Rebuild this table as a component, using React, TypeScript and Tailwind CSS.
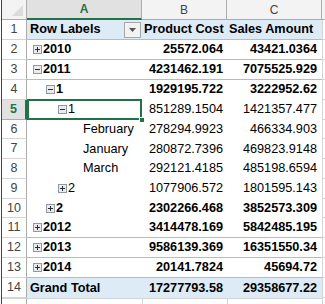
import React from "react";

type Row = {
  n: number;
  level: 0 | 1 | 2 | 3;
  btn?: "+" | "-";
  label: string;
  b: string;
  c: string;
  bold?: boolean;
  line?: boolean;
};

const rows: Row[] = [
  { n: 2, level: 0, btn: "+", label: "2010", b: "25572.064", c: "43421.0364", bold: true, line: true },
  { n: 3, level: 0, btn: "-", label: "2011", b: "4231462.191", c: "7075525.929", bold: true, line: true },
  { n: 4, level: 1, btn: "-", label: "1", b: "1929195.722", c: "3222952.62", bold: true },
  { n: 5, level: 2, btn: "-", label: "1", b: "851289.1504", c: "1421357.477" },
  { n: 6, level: 3, label: "February", b: "278294.9923", c: "466334.903" },
  { n: 7, level: 3, label: "January", b: "280872.7396", c: "469823.9148" },
  { n: 8, level: 3, label: "March", b: "292121.4185", c: "485198.6594" },
  { n: 9, level: 2, btn: "+", label: "2", b: "1077906.572", c: "1801595.143" },
  { n: 10, level: 1, btn: "+", label: "2", b: "2302266.468", c: "3852573.309", bold: true },
  { n: 11, level: 0, btn: "+", label: "2012", b: "3414478.169", c: "5842485.195", bold: true, line: true },
  { n: 12, level: 0, btn: "+", label: "2013", b: "9586139.369", c: "16351550.34", bold: true, line: true },
  { n: 13, level: 0, btn: "+", label: "2014", b: "20141.7824", c: "45694.72", bold: true, line: true },
];

const levelPad = ["pl-[6px]", "pl-[19px]", "pl-[31px]", "pl-[56px]"];

function Toggle({ kind }: { kind: "+" | "-" }) {
  return (
    <svg width="9" height="9" viewBox="0 0 9 9" className="mr-[1px] shrink-0">
      <rect x="0.5" y="0.5" width="8" height="8" fill="#e9ebee" stroke="#8e98a6" />
      <line x1="2" y1="4.5" x2="7" y2="4.5" stroke="#2d2d2d" strokeWidth="1" />
      {kind === "+" && <line x1="4.5" y1="2" x2="4.5" y2="7" stroke="#2d2d2d" strokeWidth="1" />}
    </svg>
  );
}

const grid = "grid grid-cols-[25px_115px_85px_95px_1fr]";

export default function App() {
  return (
    <div
      className="w-[325px] h-[304px] bg-white flex overflow-hidden text-black"
      style={{ fontFamily: '"Liberation Sans", Arial, sans-serif' }}
    >
      <div className="w-px bg-white" />
      <div className="w-px bg-[#24563a]" />
      <div className="flex-1 flex flex-col">
        {/* column headers */}
        <div className={`${grid} h-[22px] text-[12px]`}>
          <div className="bg-[#f3f3f3] border-b border-r border-[#ababab] flex items-end justify-end">
            <svg width="12" height="12" viewBox="0 0 12 12" className="mb-[2px] mr-[2px]">
              <polygon points="11,0 11,11 0,11" fill="#dcdcdc" />
            </svg>
          </div>
          <div className="bg-[#e1e1e1] border-b-2 border-b-[#217346] border-r border-r-[#ababab] flex items-center justify-center font-bold text-[#217346]">
            A
          </div>
          <div className="bg-[#f3f3f3] border-b border-r border-[#ababab] flex items-center justify-center text-[#444]">
            B
          </div>
          <div className="bg-[#f3f3f3] border-b border-r border-[#ababab] flex items-center justify-center text-[#444]">
            C
          </div>
          <div className="bg-[#f3f3f3] border-b border-[#ababab]" />
        </div>

        {/* row 1: pivot header */}
        <div className={`${grid} h-[20px] text-[12.7px]`}>
          <div className="border-b border-r border-b-[#d4d4d4] border-r-[#ababab] flex items-center justify-center text-[12.5px] text-[#444]">
            1
          </div>
          <div className="bg-[#ddebf7] border-b border-[#9bc2e6] flex items-center pl-[3px] font-bold">
            <span>Row Labels</span>
            <div className="ml-auto mr-[1px] w-[17px] h-[16px] bg-[#f2f2f2] border border-[#a6a6a6] flex items-center justify-center">
              <svg width="7" height="4" viewBox="0 0 7 4">
                <polygon points="0,0 7,0 3.5,4" fill="#555" />
              </svg>
            </div>
          </div>
          <div className="bg-[#ddebf7] border-b border-[#9bc2e6] flex items-center pl-[2px] font-bold whitespace-nowrap">
            Product Cost
          </div>
          <div className="bg-[#ddebf7] border-b border-[#9bc2e6] flex items-center pl-[2px] font-bold whitespace-nowrap">
            Sales Amount
          </div>
          <div className="border-l border-b border-[#d4d4d4]" />
        </div>

        {rows.map((r) => {
          const sel = r.n === 5;
          const line = r.line ? "border-b border-[#9bc2e6]" : "";
          const wt = r.bold ? "font-bold" : "";
          return (
            <div key={r.n} className={`${grid} h-[20px] text-[12.7px]`}>
              <div
                className={
                  sel
                    ? "bg-[#e1e1e1] border-b border-b-[#ababab] border-r-2 border-r-[#217346] flex items-center justify-center text-[12.5px] font-bold text-[#217346]"
                    : "border-b border-r border-b-[#d4d4d4] border-r-[#ababab] flex items-center justify-center text-[12.5px] text-[#444]"
                }
              >
                {r.n}
              </div>
              <div className={`relative flex items-center ${levelPad[r.level]} ${line} ${wt}`}>
                {r.btn && <Toggle kind={r.btn} />}
                <span className="whitespace-nowrap">{r.label}</span>
                {sel && (
                  <>
                    <div className="absolute left-0 right-0 top-[-1px] bottom-0 border-2 border-[#217346]" />
                    <div className="absolute right-[-3px] bottom-[-3px] w-[6px] h-[6px] bg-[#217346] border border-white" />
                  </>
                )}
              </div>
              <div className={`flex items-center justify-end pr-[4px] ${line} ${wt}`}>{r.b}</div>
              <div className={`flex items-center justify-end pr-[5px] ${line} ${wt}`}>{r.c}</div>
              <div className="border-l border-b border-[#d4d4d4]" />
            </div>
          );
        })}

        {/* row 14: grand total */}
        <div className={`${grid} h-[20px] text-[12.7px]`}>
          <div className="border-b border-r border-b-[#d4d4d4] border-r-[#ababab] flex items-center justify-center text-[12.5px] text-[#444]">
            14
          </div>
          <div className="bg-[#ddebf7] flex items-center pl-[3px] font-bold">Grand Total</div>
          <div className="bg-[#ddebf7] flex items-center justify-end pr-[4px] font-bold">17277793.58</div>
          <div className="bg-[#ddebf7] flex items-center justify-end pr-[5px] font-bold">29358677.22</div>
          <div className="border-l border-b border-[#d4d4d4]" />
        </div>

        {/* row 15 (partial) */}
        <div className={`${grid} h-[20px]`}>
          <div className="border-t border-r border-t-[#d4d4d4] border-r-[#ababab]" />
          <div className="border-t border-[#d4d4d4]" />
          <div className="border-t border-l border-[#d4d4d4]" />
          <div className="border-t border-l border-[#d4d4d4]" />
          <div className="border-l border-[#d4d4d4]" />
        </div>
      </div>
    </div>
  );
}
